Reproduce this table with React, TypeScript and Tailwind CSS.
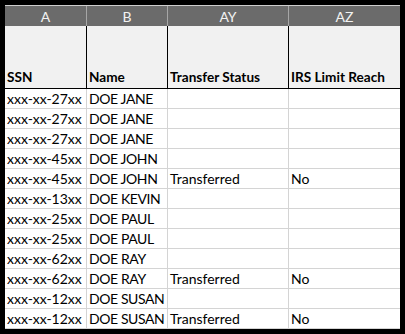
const rows: [string, string, string, string][] = [
  ['xxx-xx-27xx', 'DOE JANE', '', ''],
  ['xxx-xx-27xx', 'DOE JANE', '', ''],
  ['xxx-xx-27xx', 'DOE JANE', '', ''],
  ['xxx-xx-45xx', 'DOE JOHN', '', ''],
  ['xxx-xx-45xx', 'DOE JOHN', 'Transferred', 'No'],
  ['xxx-xx-13xx', 'DOE KEVIN', '', ''],
  ['xxx-xx-25xx', 'DOE PAUL', '', ''],
  ['xxx-xx-25xx', 'DOE PAUL', '', ''],
  ['xxx-xx-62xx', 'DOE RAY', '', ''],
  ['xxx-xx-62xx', 'DOE RAY', 'Transferred', 'No'],
  ['xxx-xx-12xx', 'DOE SUSAN', '', ''],
  ['xxx-xx-12xx', 'DOE SUSAN', 'Transferred', 'No'],
];

const letters = ['A', 'B', 'AY', 'AZ'];
const titles = ['SSN', 'Name', 'Transfer Status', 'IRS Limit Reach'];
const widths = ['w-[82px]', 'w-[81px]', 'w-[121px]', 'w-[111px]'];

export default function App() {
  return (
    <div className="h-[334px] w-[405px] bg-black p-[5px] font-['Lato','Liberation_Sans',sans-serif]">
      {/* column letters */}
      <div className="flex h-[21px] border-t border-[#cfcfcf] bg-[#6b6b6b]">
        {letters.map((l, i) => (
          <div
            key={l}
            className={`${widths[i]} flex items-center justify-center text-[14px] text-[#f2f2f2] ${i < 3 ? 'border-r border-[#a6a6a6]' : ''}`}
          >
            {l}
          </div>
        ))}
      </div>

      {/* tall header row */}
      <div className="flex h-[63px] border-b border-black bg-[#f1f1f1]">
        {titles.map((t, i) => (
          <div
            key={t}
            className={`${widths[i]} flex items-end whitespace-nowrap pb-[3px] pl-[2px] text-[13.6px] font-bold leading-none text-black ${i < 3 ? 'border-r border-black' : ''}`}
          >
            {t}
          </div>
        ))}
      </div>

      {rows.map((r, ri) => (
        <div key={ri} className="flex h-[20px] border-b border-[#d4d4d4] bg-white">
          {r.map((c, i) => (
            <div
              key={i}
              className={`${widths[i]} flex shrink-0 items-end whitespace-nowrap pb-[2px] pl-[2px] text-[14px] leading-none text-black ${i === 1 ? 'tracking-[-0.4px]' : ''} ${i < 3 ? 'border-r border-[#d4d4d4]' : ''}`}
            >
              {c}
            </div>
          ))}
        </div>
      ))}
    </div>
  );
}
